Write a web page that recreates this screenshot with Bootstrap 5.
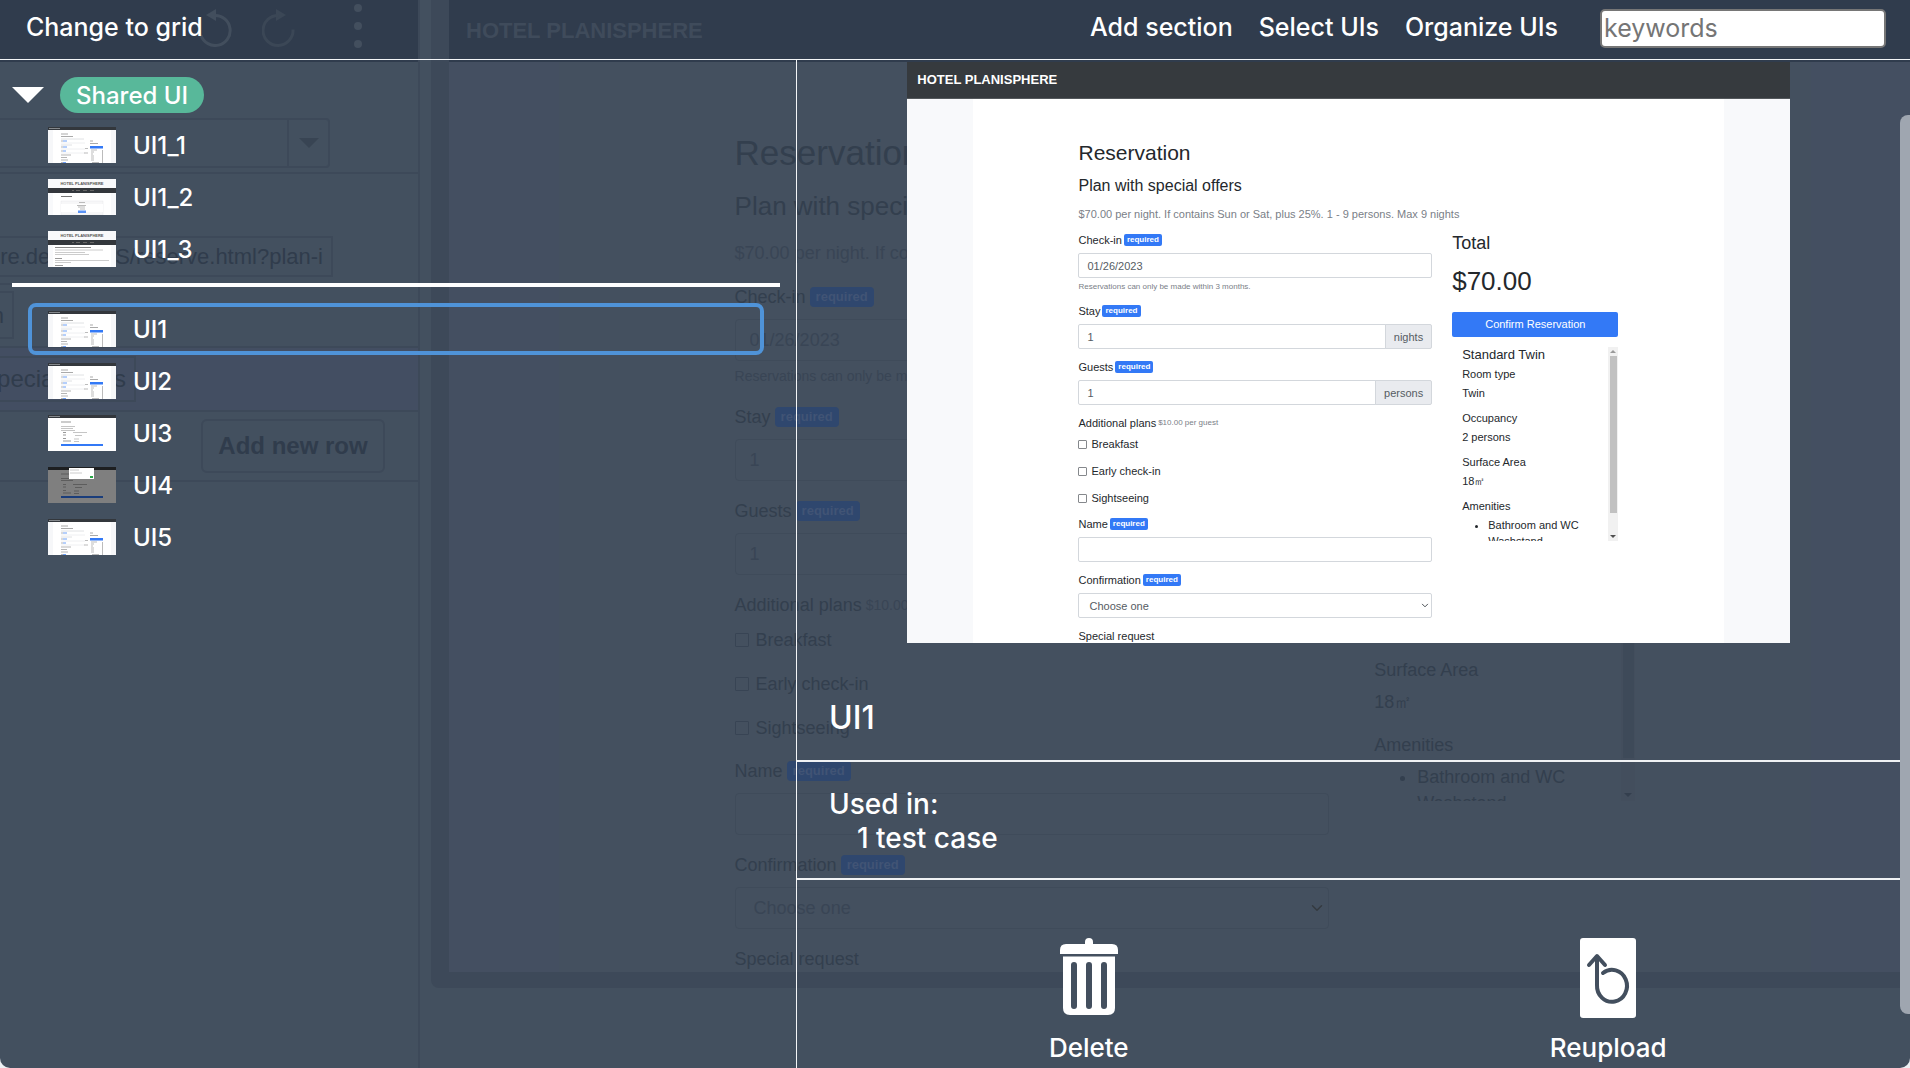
<!DOCTYPE html>
<html lang="en">
<head>
<meta charset="utf-8">
<meta name="viewport" content="width=device-width, initial-scale=1">
<title>UI list</title>
<link href="https://cdn.jsdelivr.net/npm/bootstrap@5.3.0/dist/css/bootstrap.min.css" rel="stylesheet">
<style>
html,body{height:100%}
body{background:#eef1f4;font-family:Inter,"Noto Sans",sans-serif;overflow:hidden}
.app-shell{height:100vh;border-radius:0 0 10px 10px;background:#43505f;color:#fff}

/* dimmed editor behind the overlay */
.editor-layer{inset:0;font-family:"Liberation Sans",Arial,sans-serif;font-size:22px;color:#303c4c}
.steps-pane{width:420px;border-right:2px solid #3d4959}
.steps-bar{height:62px;background:#303c4d;padding:0 52px 9px 0;gap:30px}
.steps-row{border-bottom:2px solid #3d4959}
.row-target{height:112px;padding:0 88px 4px 0}
.combo-box{height:50px;border:2px solid #3d4959;border-left:0;border-radius:0 4px 4px 0}
.combo-arrow{width:41px;border-left:2px solid #3d4959}
.row-url{height:111px;padding:0 85px 6px 0}
.url-box{height:41px;border:2px solid #3d4959;border-left:0;padding-right:8px}
.row-small{height:63px;padding-top:6px}
.small-box{width:14px;height:48px;border:2px solid #3d4959;border-left:0;padding-right:8px}
.row-value{height:64px;background:#434e62;padding-top:8px}
.value-box{width:136px;height:46px;border:2px solid #3d4959;border-left:0;padding-right:8px;font-size:24px}
.row-add{height:70px;padding:7px 33px 0 0}
.add-btn{width:184px;height:54px;border:2px solid #3d4959;border-radius:6px;background:none;color:#303c4c;font-weight:700;font-size:24px}
.stage{margin-left:11px;margin-bottom:80px;padding:0 0 16px 18px;background:#3d4959;border-radius:0 0 0 8px}
.stage .hp-page{margin-right:-11px}

/* hotel page, drawn at two scales */
.hp-page{font-family:"Liberation Sans",Arial,sans-serif;background:var(--side);color:var(--ink);font-size:var(--fs);line-height:var(--lh)}
.hp-nav{background:var(--nav);color:var(--navink);height:var(--navh);padding-left:var(--navpad);font-weight:700;font-size:var(--brand);border-bottom:1px solid var(--navline)}
.hp-main{width:85%;background:var(--paper)}
.hp-content{width:72%;padding-top:var(--top)}
.hp-page h1{font-size:var(--h1);line-height:var(--h1l);margin:0 0 var(--g1);font-weight:400}
.hp-page h2{font-size:var(--h2);line-height:var(--h2l);margin:0 0 var(--g2);font-weight:400}
.hp-page .hp-lead{color:var(--muted);margin:0 0 var(--g2);white-space:nowrap}
.hp-cols{gap:var(--colgap)}
.hp-form{flex:0 0 var(--formw)}
.hp-group{margin-bottom:var(--gap)}
.hp-label{display:flex;align-items:center;gap:var(--bgap);margin-bottom:var(--lgap);height:var(--lh);white-space:nowrap}
.hp-label small{font-size:var(--sm);color:var(--muted)}
.hp-req{background:var(--blue);color:var(--bluetext);font-weight:700;font-size:var(--bfs);line-height:var(--bh);padding:0 var(--bpad);border-radius:var(--brad)}
.hp-page .form-control,.hp-page .form-select{height:var(--inh);min-height:0;font-size:var(--fs);line-height:var(--lh);padding:0 var(--inpad);border:1px solid var(--line);background-color:transparent;color:var(--intext);border-radius:var(--brad)}
.hp-page .form-select{padding-left:var(--selpad);background-position:right var(--chevr) center;background-size:var(--chev)}
.hp-page .form-control.addon-input{border-radius:var(--brad) 0 0 var(--brad)}
.hp-page .input-group-text{font-size:var(--fs);line-height:var(--lh);padding:0 var(--inpad);border:1px solid var(--line);background:var(--addon);color:var(--intext);border-radius:0 var(--brad) var(--brad) 0}
.hp-help{font-size:var(--sm);line-height:var(--hlh);margin-top:var(--hgap);color:var(--muted);white-space:nowrap}
.hp-check{display:flex;align-items:center;gap:var(--cgap);margin-bottom:calc(var(--gap) + 1px)}
.hp-check:last-child{margin-bottom:var(--last)}
.hp-check input{appearance:none;width:var(--cb);height:var(--cb);border:1px solid var(--cbline);border-radius:1px;margin:0}
.hp-total{font-size:var(--tot);line-height:var(--totl);margin-bottom:var(--totg)}
.hp-price{font-size:var(--pr);line-height:var(--prl);margin-bottom:var(--prg)}
.hp-page .hp-btn{height:var(--inh);font-size:var(--fs);padding:0;background:var(--blue);color:var(--bluetext);border:0;border-radius:var(--brad);margin-bottom:var(--gap);width:100%}
.hp-room{height:var(--rh);overflow:hidden}
.hp-roomtext{padding-left:var(--gap)}
.hp-roomtext dl,.hp-roomtext dt,.hp-roomtext dd{margin:0;font-weight:400}
.hp-roomtext dt{margin-bottom:var(--dg)}
.hp-roomtext dd{margin-bottom:var(--ddg)}
.hp-roomtext ul{margin:0;padding-left:var(--ul)}
.hp-roomname{font-size:var(--rn);margin-bottom:var(--dg)}
.hp-scroll{width:var(--sw);background:var(--track)}
.hp-scroll i{width:0;height:0;border:var(--arr) solid transparent;margin:var(--arr) 0}
.hp-scroll .arr-up{border-bottom-color:var(--arrup);border-top:0}
.hp-scroll .arr-down{border-top-color:var(--arrdn);border-bottom:0}
.hp-scroll span{width:75%;height:var(--thumbh);background:var(--thumb)}

.scale-back{--side:#444f61;--paper:#44505f;--ink:#333f4e;--muted:#394555;--intext:#394555;--nav:#303c4d;--navink:#3f4b5b;--navline:#303c4d;--line:#3f4b5a;--blue:#2f476e;--bluetext:#415475;--addon:#414c5b;--cbline:#384454;--track:#434e5d;--thumb:#3e4a59;--arrup:#3e4958;--arrdn:#343f4e;
--formw:66%;--last:1px;--thumbh:83%;--fs:18px;--lh:26px;--navh:62px;--navpad:17px;--brand:22px;--top:69px;--h1:35px;--h1l:44px;--g1:15px;--h2:26px;--h2l:32px;--g2:18px;--colgap:28px;--gap:17px;--bgap:4px;--lgap:9px;--sm:14px;--bfs:13px;--bh:20px;--bpad:6px;--brad:4px;--inh:42px;--inpad:14px;--selpad:18px;--chevr:4px;--chev:14px 12px;--hlh:22px;--hgap:4px;--cgap:7px;--cb:14px;--tot:30px;--totl:38px;--totg:20px;--pr:43px;--prl:48px;--prg:26px;--rh:326px;--dg:6px;--ddg:17px;--ul:43px;--rn:22px;--sw:14px;--arr:4px}
.scale-front{--side:#f8f9fb;--paper:#fff;--ink:#24282c;--muted:#7a8087;--intext:#565c63;--nav:#363a3e;--navink:#fff;--navline:#54585c;--line:#d3d7dc;--blue:#3379f6;--bluetext:#fff;--addon:#e9ebef;--cbline:#85888c;--track:#f1f1f1;--thumb:#c1c1c1;--arrup:#9a9a9a;--arrdn:#505050;
--formw:65.5%;--last:0px;--thumbh:81%;--fs:11px;--lh:16px;--navh:37px;--navpad:10px;--brand:13px;--top:41px;--h1:21px;--h1l:26px;--g1:10px;--h2:16px;--h2l:20px;--g2:10px;--colgap:20px;--gap:10px;--bgap:2px;--lgap:5px;--sm:8px;--bfs:8px;--bh:12px;--bpad:3px;--brad:2px;--inh:25px;--inpad:8px;--selpad:10px;--chevr:2px;--chev:8px 7px;--hlh:12px;--hgap:3px;--cgap:4px;--cb:9px;--tot:18px;--totl:22px;--totg:12px;--pr:26px;--prl:30px;--prg:16px;--rh:194px;--dg:3px;--ddg:9px;--ul:26px;--rn:13px;--sw:10px;--arr:3px}

/* overlay */
.top-bar{height:60px;border-bottom:1px solid #f3f5f7;padding:0 24px 3px 26px;font-size:25px;font-weight:500}
.top-bar a{color:#fff;text-decoration:none;white-space:nowrap}
.top-links{gap:26px}
.top-bar .search-box{width:286px;height:39px;margin-left:16px;border:2px solid #767676;border-radius:5px;padding:0 2px;font-size:25px;color:#333}
.top-bar .search-box::placeholder{color:#757575;opacity:1}
.list-pane{flex:0 0 797px;border-right:1px solid #f3f5f7;padding:17px 16px 0 12px;font-size:24px;font-weight:500}
.section-head{gap:16px;margin-bottom:6px}
.section-toggle{background:none;border:0;padding:0;line-height:0}
.shared-tag{background:#58b89a;border-radius:18px;height:36px;line-height:37px;padding:0 16px}
.ui-item{height:52px;padding:0 16px;gap:17px;margin:0 16px 0 12px;border:4px solid transparent;border-radius:8px;background:none;color:#fff;font-weight:500;text-align:left}
.ui-item{margin-left:16px}
.ui-item svg{width:68px;height:36px;flex:none}
.ui-name{padding-top:2px}
.ui-item.is-active{border-color:#4f93d8}
.list-rule{height:4px;background:#fff;margin:8px 0 16px}
.detail-pane{min-width:0;overflow:hidden}
.detail-body{margin-right:10px}
.preview{width:80%;margin:2px auto 0;aspect-ratio:883/581;overflow:hidden}
.detail-block{border-bottom:2px solid #f0f2f4;padding-left:32px;font-weight:500}
.name-block{font-size:32px;line-height:38px;padding-top:56px;padding-bottom:23px}
.used-block{font-size:28px;line-height:34px;padding-top:25px;padding-bottom:23px}
.used-count{padding-left:28px}
.detail-actions{padding:58px 32px 0}
.action-btn{flex:1 1 0;background:none;border:0;color:#fff;font-size:26px;line-height:32px;font-weight:500;padding:0;gap:14px}
.pane-scroll{right:0;top:115px;width:10px;height:899px;background:#9fa6b0;border-radius:8px 0 0 8px}
</style>
</head>
<body>
<svg width="0" height="0" class="position-absolute" aria-hidden="true">
 <symbol id="th-form" viewBox="0 0 68 36">
  <rect width="68" height="36" fill="#f6f7f9"/><rect x="5" width="58" height="36" fill="#fff"/>
  <rect width="68" height="3" fill="#33373c"/><rect x="1" y="1" width="11" height="1" fill="#85898d"/>
  <path d="M13 7h7M13 9.500h12M42 14h3M42 16.500h8" stroke="#aaa" stroke-width="1"/>
  <path d="M13 12h23M13 18h11" stroke="#e0e2e4"/>
  <path d="M13 14h2M13 20h2M13 24h2M13 28h10M13 30.500h6M13 33h7M13 35.500h2" stroke="#b5b5b5"/>
  <path d="M15 14h4M15 20h4M15 24h3M15 35.500h3" stroke="#6da0f7"/>
  <path d="M13 16h24M13 22h24M13 26h24" stroke="#eff0f2"/>
  <path d="M37 21.500h3M36 26h4" stroke="#bbb"/>
  <rect x="42" y="19" width="13" height="2.500" fill="#3379f6"/>
  <path d="M43 23h6M43 25h3M43 27h2M43 29h3M43 31h3M43 33h3M44 35.500h7" stroke="#bbb"/>
  <path d="M54.500 23v13" stroke="#bbb"/>
 </symbol>
 <symbol id="th-home" viewBox="0 0 68 36">
  <rect width="68" height="36" fill="#f8f9fb"/><rect x="5" y="14" width="58" height="22" fill="#fff"/>
  <text x="34" y="6.300" font-size="4" font-weight="700" text-anchor="middle" fill="#555" font-family="Liberation Sans">HOTEL PLANISPHERE</text>
  <rect y="9" width="68" height="5" fill="#33373c"/><path d="M24 11.500h2M28 11.500h4M35 11.500h4M42 11.500h4" stroke="#666"/>
 </symbol>
</svg>

<div class="app-shell position-relative overflow-hidden">

 <div class="editor-layer position-absolute d-flex" aria-hidden="true" inert>
  <div class="steps-pane d-flex flex-column flex-shrink-0 overflow-hidden">
   <div class="steps-bar d-flex justify-content-end align-items-center">
    <svg width="34" height="40" viewBox="0 0 34 40"><path d="M8 8l10-6v12z" fill="#424e5d"/><path d="M17 8.500a15 15 0 1 1-14 20" fill="none" stroke="#424e5d" stroke-width="3"/></svg>
    <svg width="34" height="40" viewBox="0 0 34 40"><path d="M24 8l-10-6v12z" fill="#3b4756"/><path d="M17 8.500a15 15 0 1 0 14 14" fill="none" stroke="#3b4756" stroke-width="3"/></svg>
    <svg width="40" height="50" viewBox="0 0 40 50"><g fill="#434f5e"><circle cx="32" cy="6" r="4"/><circle cx="32" cy="24" r="4"/><circle cx="32" cy="42" r="4"/></g></svg>
   </div>
   <div class="steps-row row-target d-flex flex-column justify-content-end"><div class="combo-box d-flex justify-content-end"><div class="combo-arrow d-flex align-items-center justify-content-center"><svg width="20" height="10" viewBox="0 0 20 10"><path d="M0 0h20L10 10z" fill="#384453"/></svg></div></div></div>
   <div class="steps-row row-url d-flex flex-column justify-content-end"><div class="url-box d-flex justify-content-end align-items-center text-nowrap overflow-hidden">re.dev/en-US/reserve.html?plan-i</div></div>
   <div class="steps-row row-small"><div class="small-box d-flex justify-content-end align-items-center">n</div></div>
   <div class="steps-row row-value"><div class="value-box d-flex justify-content-end align-items-center text-nowrap">pecial offers</div></div>
   <div class="steps-row row-add d-flex justify-content-end align-items-start"><button class="add-btn" type="button">Add new row</button></div>
  </div>
  <div class="stage flex-grow-1 overflow-hidden">
   <div class="hp-page scale-back h-100 overflow-hidden">
    <div class="hp-nav d-flex align-items-center">HOTEL PLANISPHERE</div>
    <div class="hp-main mx-auto"><div class="hp-content mx-auto">
     <h1>Reservation</h1><h2>Plan with special offers</h2>
     <p class="hp-lead">$70.00 per night. If contains Sun or Sat, plus 25%. 1 - 9 persons. Max 9 nights</p>
     <div class="hp-cols d-flex">
      <div class="hp-form">
       <div class="hp-group"><label class="hp-label" for="b-date">Check-in <span class="hp-req">required</span></label><input class="form-control" id="b-date" value="01/26/2023"><div class="hp-help">Reservations can only be made within 3 months.</div></div>
       <div class="hp-group"><label class="hp-label" for="b-stay">Stay <span class="hp-req">required</span></label><input class="form-control" id="b-stay" value="1"></div>
       <div class="hp-group"><label class="hp-label" for="b-guests">Guests <span class="hp-req">required</span></label><input class="form-control" id="b-guests" value="1"></div>
       <div class="hp-group"><div class="hp-label">Additional plans <small>$10.00 per guest</small></div>
        <label class="hp-check"><input type="checkbox">Breakfast</label><label class="hp-check"><input type="checkbox">Early check-in</label><label class="hp-check"><input type="checkbox">Sightseeing</label></div>
       <div class="hp-group"><label class="hp-label" for="b-name">Name <span class="hp-req">required</span></label><input class="form-control" id="b-name"></div>
       <div class="hp-group"><label class="hp-label" for="b-conf">Confirmation <span class="hp-req">required</span></label><select class="form-select" id="b-conf"><option>Choose one</option></select></div>
       <div class="hp-label">Special request</div>
      </div>
      <div class="flex-grow-1">
       <div class="hp-total">Total</div><div class="hp-price">$70.00</div>
       <button class="btn hp-btn" type="button">Confirm Reservation</button>
       <div class="hp-room d-flex"><div class="hp-roomtext flex-grow-1"><div class="hp-roomname">Standard Twin</div>
        <dl><dt>Room type</dt><dd>Twin</dd><dt>Occupancy</dt><dd>2 persons</dd><dt>Surface Area</dt><dd>18㎡</dd><dt>Amenities</dt></dl><ul><li>Bathroom and WC<br>Washstand</li></ul></div>
        <div class="hp-scroll d-flex flex-column align-items-center"><i class="arr-up"></i><span></span><i class="arr-down mt-auto"></i></div></div>
      </div>
     </div>
    </div></div>
   </div>
  </div>
 </div>

 <div class="position-relative d-flex flex-column h-100">
  <header class="top-bar d-flex align-items-center justify-content-between flex-shrink-0">
   <a href="#">Change to grid</a>
   <nav class="top-links d-flex align-items-center"><a href="#">Add section</a><a href="#">Select UIs</a><a href="#">Organize UIs</a><input class="search-box" type="text" placeholder="keywords" aria-label="keywords"></nav>
  </header>
  <div class="d-flex flex-grow-1 overflow-hidden">
   <aside class="list-pane">
    <div class="section-head d-flex align-items-center"><button class="section-toggle" type="button" aria-label="Toggle shared UI"><svg width="32" height="16" viewBox="0 0 32 16"><path d="M0 0h32L16 16z" fill="#fff"/></svg></button><span class="shared-tag">Shared UI</span></div>
    <div class="d-flex flex-column">
     <button type="button" class="ui-item d-flex align-items-center"><svg><use href="#th-form"/></svg><span class="ui-name">UI1_1</span></button>
     <button type="button" class="ui-item d-flex align-items-center"><svg viewBox="0 0 68 36"><use href="#th-home"/><path d="M13 17.500h11" stroke="#777"/><rect x="13" y="22" width="42" height="14" fill="#f7f7f8" stroke="#e6e7e9" stroke-width=".5"/><rect x="13" y="25" width="42" height="8" fill="#fff"/><path d="M31 23.500h6M29 26.500h9M30 28h7M32 30h5" stroke="#bbb"/><rect x="30" y="31.500" width="8" height="2.500" fill="#5b93f5"/></svg><span class="ui-name">UI1_2</span></button>
     <button type="button" class="ui-item d-flex align-items-center"><svg viewBox="0 0 68 36"><use href="#th-home"/><path d="M7 16.500h36" stroke="#888"/><path d="M7 19h48M7 21.500h30M7 23.500h34M7 29.500h54M7 31.500h16" stroke="#ccc"/><path d="M7 27.500h7M7 34.500h8" stroke="#999"/></svg><span class="ui-name">UI1_3</span></button>
    </div>
    <div class="list-rule"></div>
    <div class="d-flex flex-column">
     <button type="button" class="ui-item is-active d-flex align-items-center"><svg><use href="#th-form"/></svg><span class="ui-name">UI1</span></button>
     <button type="button" class="ui-item d-flex align-items-center"><svg><use href="#th-form"/></svg><span class="ui-name">UI2</span></button>
     <button type="button" class="ui-item d-flex align-items-center"><svg viewBox="0 0 68 36"><rect width="68" height="36" fill="#fff"/><rect width="68" height="3" fill="#33373c"/><path d="M1 1.500h11" stroke="#85898d"/><path d="M13 7h10" stroke="#999"/><path d="M13 11.500h14M13 13.500h12M13 15.500h14M25 17.500h14M27 20.500h7M26 24h5M26 26.500h5" stroke="#c5c5c5"/><path d="M15 17.500h3M15 20h3M15 23.500h3M15 26h8" stroke="#999"/><rect x="13" y="29" width="42" height="2" fill="#3379f6"/></svg><span class="ui-name">UI3</span></button>
     <button type="button" class="ui-item d-flex align-items-center"><svg viewBox="0 0 68 36"><rect width="68" height="36" fill="#7f7f7f"/><rect width="68" height="3" fill="#1d1f21"/><path d="M13 7h10M13 11.500h14M13 13.500h12M15 17.500h3M15 20h3M15 23.500h3M15 26h8M25 17.500h14M27 20.500h7M26 24h5M26 26.500h5" stroke="#5d5d5d"/><rect x="13" y="29" width="42" height="2" fill="#1a3d7b"/><rect x="21" y="1" width="25" height="11" fill="#fff"/><path d="M22 3h9M22 6h12" stroke="#ccc"/><rect x="42" y="9" width="3" height="2" fill="#28a745"/></svg><span class="ui-name">UI4</span></button>
     <button type="button" class="ui-item d-flex align-items-center"><svg><use href="#th-form"/></svg><span class="ui-name">UI5</span></button>
    </div>
   </aside>
   <main class="detail-pane flex-grow-1"><div class="detail-body">
    <div class="preview">
     <div class="hp-page scale-front h-100">
      <div class="hp-nav d-flex align-items-center">HOTEL PLANISPHERE</div>
      <div class="hp-main mx-auto"><div class="hp-content mx-auto">
       <h1>Reservation</h1><h2>Plan with special offers</h2>
       <p class="hp-lead">$70.00 per night. If contains Sun or Sat, plus 25%. 1 - 9 persons. Max 9 nights</p>
       <div class="hp-cols d-flex">
        <div class="hp-form">
         <div class="hp-group"><label class="hp-label" for="f-date">Check-in <span class="hp-req">required</span></label><input class="form-control" id="f-date" value="01/26/2023"><div class="hp-help">Reservations can only be made within 3 months.</div></div>
         <div class="hp-group"><label class="hp-label" for="f-stay">Stay <span class="hp-req">required</span></label><div class="input-group"><input class="form-control addon-input" id="f-stay" value="1"><span class="input-group-text">nights</span></div></div>
         <div class="hp-group"><label class="hp-label" for="f-guests">Guests <span class="hp-req">required</span></label><div class="input-group"><input class="form-control addon-input" id="f-guests" value="1"><span class="input-group-text">persons</span></div></div>
         <div class="hp-group"><div class="hp-label">Additional plans <small>$10.00 per guest</small></div>
          <label class="hp-check"><input type="checkbox">Breakfast</label><label class="hp-check"><input type="checkbox">Early check-in</label><label class="hp-check"><input type="checkbox">Sightseeing</label></div>
         <div class="hp-group"><label class="hp-label" for="f-name">Name <span class="hp-req">required</span></label><input class="form-control" id="f-name"></div>
         <div class="hp-group"><label class="hp-label" for="f-conf">Confirmation <span class="hp-req">required</span></label><select class="form-select" id="f-conf"><option>Choose one</option></select></div>
         <div class="hp-label">Special request</div>
        </div>
        <div class="flex-grow-1">
         <div class="hp-total">Total</div><div class="hp-price">$70.00</div>
         <button class="btn hp-btn" type="button">Confirm Reservation</button>
         <div class="hp-room d-flex"><div class="hp-roomtext flex-grow-1"><div class="hp-roomname">Standard Twin</div>
          <dl><dt>Room type</dt><dd>Twin</dd><dt>Occupancy</dt><dd>2 persons</dd><dt>Surface Area</dt><dd>18㎡</dd><dt>Amenities</dt></dl><ul><li>Bathroom and WC<br>Washstand</li></ul></div>
          <div class="hp-scroll d-flex flex-column align-items-center"><i class="arr-up"></i><span></span><i class="arr-down mt-auto"></i></div></div>
        </div>
       </div>
      </div></div>
     </div>
    </div>
    <div class="detail-block name-block">UI1</div>
    <div class="detail-block used-block">Used in:<div class="used-count">1 test case</div></div>
    <div class="detail-actions d-flex">
     <button type="button" class="action-btn d-flex flex-column align-items-center">
      <svg width="58" height="80" viewBox="0 0 58 80"><path d="M25 6V4a4 4 0 0 1 8 0v2h19q6 0 6 6v4H0v-4q0-6 6-6zM3 18.500h52V70q0 7-7 7H10q-7 0-7-7z" fill="#fff"/><g stroke="#434f5e" stroke-width="6" stroke-linecap="round"><path d="M14 27v41M29 27v41M44 27v41"/></g></svg>
      Delete</button>
     <button type="button" class="action-btn d-flex flex-column align-items-center">
      <svg width="56" height="80" viewBox="0 0 56 80"><rect width="56" height="80" rx="3" fill="#fff"/><path d="M9 27l8-9 8 9M17 19v28a15 16 0 1 0 6-12" fill="none" stroke="#434f5e" stroke-width="4" stroke-linecap="round" stroke-linejoin="round"/></svg>
      Reupload</button>
    </div>
   </div></main>
  </div>
 </div>
 <div class="pane-scroll position-absolute"></div>
</div>
<script src="https://cdn.jsdelivr.net/npm/bootstrap@5.3.0/dist/js/bootstrap.bundle.min.js"></script>
</body>
</html>
